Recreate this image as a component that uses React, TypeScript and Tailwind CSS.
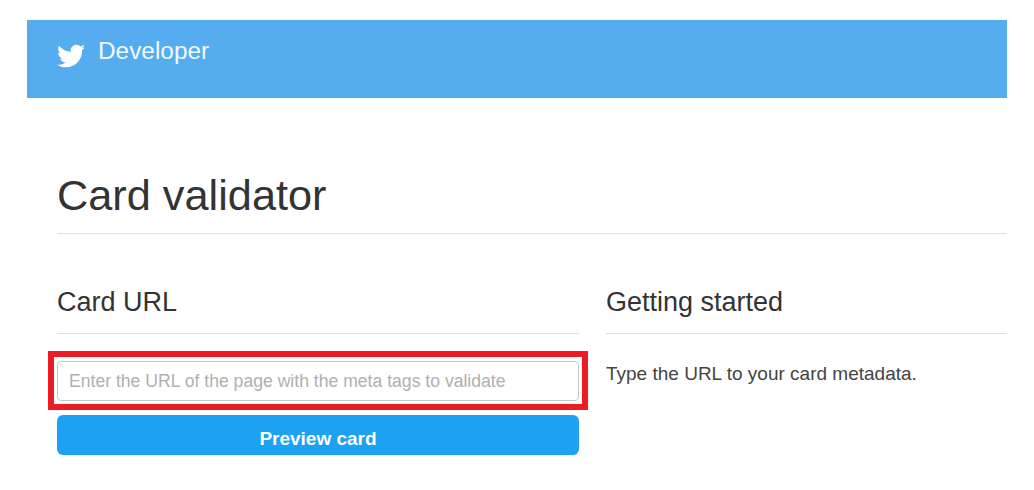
import React from 'react';
import { FaTwitter } from 'react-icons/fa';

const App: React.FC = () => {
  return (
    <div className="w-[1034px] h-[490px] overflow-hidden bg-white pt-5 pl-[27px] pr-[27px] font-['Liberation_Sans',Arial,sans-serif] text-[#333]">
      {/* Top bar */}
      <header className="h-[78px] bg-[#55acee] flex items-start pl-[30px] pt-[17px] text-white">
        <FaTwitter className="w-[28px] h-[28px] mt-[5px] text-white" />
        <span className="ml-[13px] text-[24.4px] leading-[28px] text-[#f2f9fe]">Developer</span>
      </header>

      <main className="pl-[30px]">
        <div className="mt-[74px] h-[62px] border-b border-[#dedede]">
          <h1 className="text-[43.3px] leading-[46px] text-[#333]">Card validator</h1>
        </div>

        <div className="flex mt-[50px] gap-[27px]">
          {/* Left column */}
          <section className="w-[522px] shrink-0">
            <h2 className="text-[27px] leading-[36px] h-[50px] border-b border-[#dedede] text-[#333]">Card URL</h2>
            <div className="relative mt-[27px]">
              <input
                readOnly
                placeholder="Enter the URL of the page with the meta tags to validate"
                className="block w-full h-10 px-[11px] rounded border border-[#c8c8c8] bg-white text-[17.6px] outline-none placeholder:text-[#b0b0b0]"
              />
              <div className="absolute -left-[9px] -right-[9px] -top-[10px] -bottom-[9px] border-[6px] border-[#ed1c24] pointer-events-none" />
            </div>
            <button className="block w-full h-10 mt-[14px] pt-2 rounded-md bg-[#1da1f2] text-white font-bold text-[19px] leading-[24px]">
              Preview card
            </button>
          </section>

          {/* Right column */}
          <section className="flex-1">
            <h2 className="text-[27px] leading-[36px] h-[50px] border-b border-[#dedede] text-[#333]">Getting started</h2>
            <p className="mt-[28px] text-[19px] leading-[24px] text-[#444]">Type the URL to your card metadata.</p>
          </section>
        </div>
      </main>
    </div>
  );
};

export default App;
